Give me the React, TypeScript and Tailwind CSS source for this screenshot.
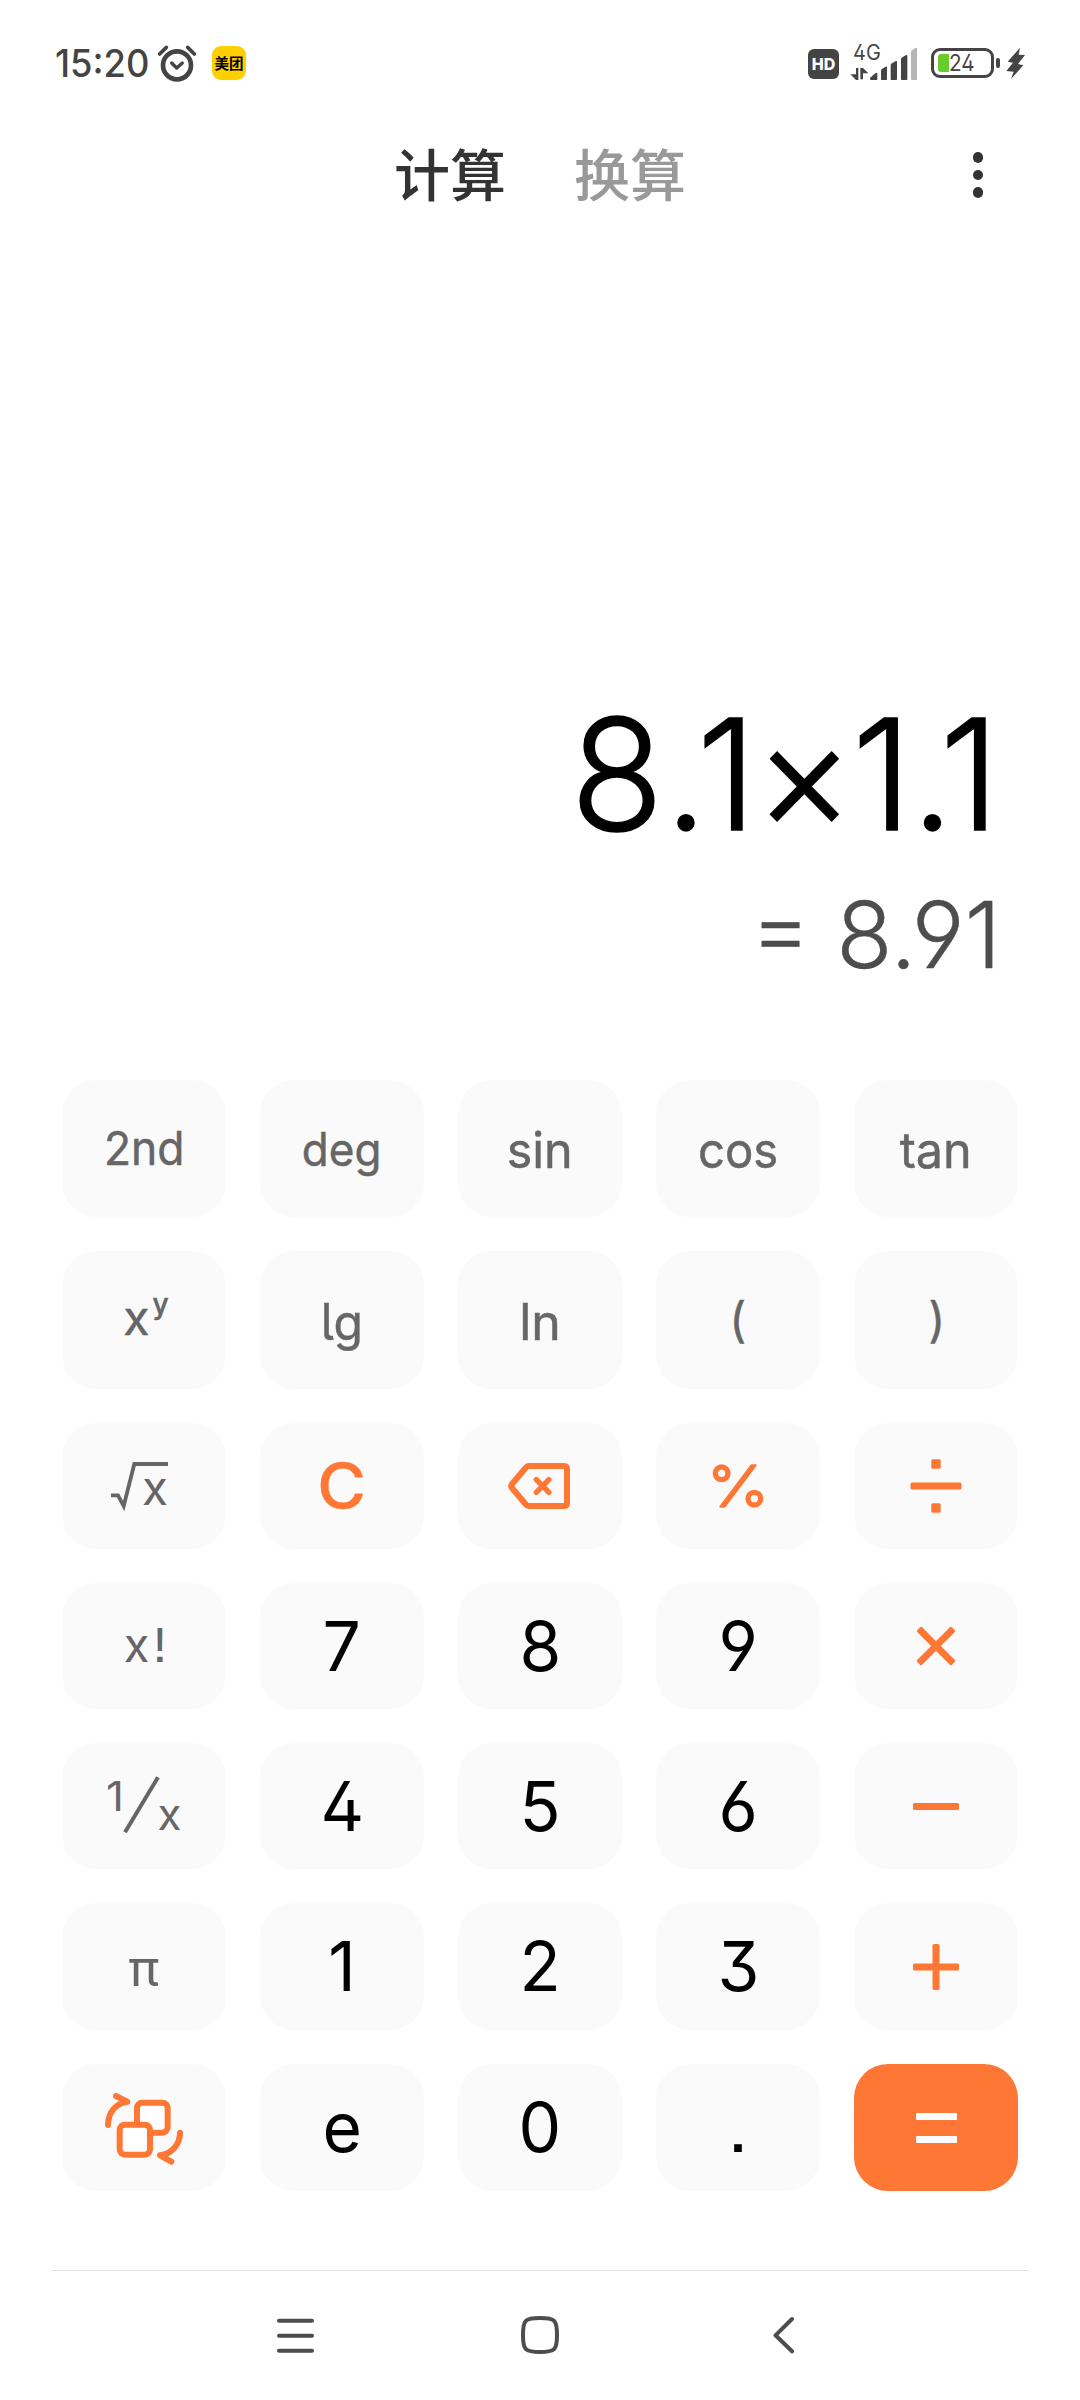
import React from 'react';

const AlarmIcon = () => (
  <svg width="40" height="38" viewBox="0 0 120 114" fill="none" stroke="#444" strokeLinecap="round" strokeLinejoin="round" className="shrink-0">
    <circle cx="60" cy="64" r="42" strokeWidth="14" />
    <path d="M44 57l15 15 17-15" strokeWidth="10" />
    <path d="M8 30l20-20M92 10l20 20" strokeWidth="11" />
  </svg>
);

const SignalIcon = () => (
  <svg width="68" height="32" viewBox="0 0 204 96" fill="#444" className="shrink-0">
    <path d="M18 60h7v36h-7L1 79h17zM31 94V60h8l16 16H39v18z" />
    <path d="M60 92q0-4 4-6l12-10q6-4 6 2v16q0 2-2 2H64q-4 0-4-4zM93 68q0-4 4-6l10-6q4-2 4 2v36q0 2-2 2H95q-2 0-2-2zM122 52q0-4 4-6l10-6q5-2 5 2v52q0 2-2 2h-15q-2 0-2-2zM153 34q0-4 4-6l10-6q5-2 5 2v70q0 2-2 2h-15q-2 0-2-2z" />
    <path fill="#b5b5b5" d="M183 12q0-4 4-6l9-6q5-2 5 2v92q0 2-2 2h-14q-2 0-2-2z" />
  </svg>
);

const StatusBar = () => (
  <div className="flex h-[126px] items-center justify-between pl-[55px] pr-[55px] text-[#444]">
    <div className="flex items-center">
      <span className="mt-[2px] w-[102px] whitespace-nowrap text-[37.5px] font-medium leading-none">
        <span className="inline-block origin-left scale-x-[0.97]">15:20</span>
      </span>
      <AlarmIcon />
      <span className="ml-[15px] flex h-[34px] w-[34px] items-center justify-center rounded-[9px] bg-[#ffd000] font-['Noto_Sans_CJK_SC',sans-serif] text-[14.5px] font-bold leading-none text-black">
        美团
      </span>
    </div>
    <div className="flex items-center">
      <span className="mt-[1px] flex h-[30px] w-[31px] items-center justify-center rounded-[6px] bg-[#444] text-[16px] font-extrabold leading-none text-white">
        HD
      </span>
      <div className="relative ml-[11px] flex h-[34px] w-[68px] items-end">
        <SignalIcon />
        <span className="absolute -top-[4px] left-[3px] text-[21px] leading-none">
          <span className="inline-block origin-left scale-x-[0.95]">4G</span>
        </span>
      </div>
      <div className="relative ml-[13px] flex h-[30px] w-[63px] items-center rounded-[9px] border-[3px] border-[#444] pl-[3.5px]">
        <span className="h-[18.5px] w-[11.5px] shrink-0 rounded-l-[3px] bg-[#67cc2c]" />
        <span className="inline-block origin-left scale-x-[0.9] text-[23px] leading-none">24</span>
      </div>
      <span className="ml-[2px] h-[10px] w-[4px] rounded-[2px] bg-[#444]" />
      <svg width="19" height="32" viewBox="0 0 57 96" fill="#444" className="ml-[6px]">
        <path d="M42 2L5 44l16 3L1 72l22 2-8 22 37-41-16-4 21-27-19-1z" />
      </svg>
    </div>
  </div>
);

const Tabs = () => (
  <div className="flex h-[98px] items-center pl-[394px] pr-[97px] font-['Noto_Sans_CJK_SC',sans-serif] text-[56px] font-medium leading-none">
    <span className="-mt-[6px] w-[180px] text-[#333]">计算</span>
    <span className="-mt-[6px] text-[#999]">换算</span>
    <div className="ml-auto flex flex-col gap-[7px]">
      <span className="h-[10.5px] w-[10.5px] rounded-full bg-[#333]" />
      <span className="h-[10.5px] w-[10.5px] rounded-full bg-[#333]" />
      <span className="h-[10.5px] w-[10.5px] rounded-full bg-[#333]" />
    </div>
  </div>
);

const Display = () => (
  <div className="flex h-[856px] flex-col items-end pt-[472px] leading-none">
    <div className="mr-[81px] flex h-[156px] origin-right scale-x-[0.985] items-center whitespace-nowrap text-[154.5px] font-light text-black [-webkit-text-stroke:1.4px_#000]">
      <span className="tracking-[1px]">8</span>
      <span className="tracking-[-11px]">.</span>
      <span className="tracking-[-2px]">1×</span>
      <span className="tracking-[-1px]">1.1</span>
    </div>
    <div className="mr-[79px] mt-[37px] flex h-[92px] items-center text-[92px] font-light text-[#4d4d4d] [-webkit-text-stroke:0.4px_#4d4d4d]">
      <span className="whitespace-pre">= 8.91</span>
    </div>
  </div>
);

const SqrtLabel = () => (
  <svg width="60" height="52" viewBox="0 0 60 52" className="-ml-[10px] overflow-visible">
    <path d="M2 35.300h7l5.700 10.700L25.300 4H59" fill="none" stroke="#666" strokeWidth="3.800" />
    <text x="33" y="45" fontSize="48" fill="#666" textLength="26" lengthAdjust="spacingAndGlyphs">x</text>
  </svg>
);

const InverseLabel = () => (
  <svg width="76" height="60" viewBox="0 0 76 60" className="overflow-visible">
    <text x="0" y="35.300" fontSize="41.500" fill="#666" textLength="18" lengthAdjust="spacingAndGlyphs">1</text>
    <path d="M19 56.300L52 1.300" fill="none" stroke="#666" strokeWidth="4" />
    <text x="51.500" y="53.700" fontSize="43" fill="#666" textLength="24" lengthAdjust="spacingAndGlyphs">x</text>
  </svg>
);

const BackspaceIcon = () => (
  <svg width="64" height="48" viewBox="0 0 64 48" fill="none" stroke="#ff7735" strokeLinecap="round" strokeLinejoin="round" className="-ml-[2px]">
    <path d="M21.500 4H57q3 0 3 3v34q0 3-3 3H21.500Q20 44 18.500 42L5 26q-1.500-2 0-4L18.500 6Q20 4 21.500 4z" strokeWidth="6" />
    <path d="M29.300 17.700l12.600 12.600M41.900 17.700l-12.600 12.600" strokeWidth="5.400" />
  </svg>
);

const PercentIcon = () => (
  <svg width="54" height="46" viewBox="0 0 162 138" fill="none" stroke="#ff7735">
    <circle cx="32" cy="31" r="19" strokeWidth="16" />
    <circle cx="130" cy="107" r="19" strokeWidth="16" />
    <path d="M28 131L121 7h13L41 131z" fill="#ff7735" strokeWidth="6" strokeLinejoin="round" />
  </svg>
);

const DivideIcon = () => (
  <svg width="52" height="54" viewBox="0 0 52 54" fill="#ff7735">
    <rect x="21.300" y="0.300" width="9.400" height="9.400" rx="1.500" />
    <rect x="0.500" y="23.400" width="51" height="7.200" rx="1.500" />
    <rect x="21.300" y="44.300" width="9.400" height="9.400" rx="1.500" />
  </svg>
);

const TimesIcon = () => (
  <svg width="40" height="40" viewBox="-20 -20 40 40" fill="#ff7735">
    <rect x="-24.500" y="-3.400" width="49" height="6.800" rx="1.500" transform="rotate(45)" />
    <rect x="-24.500" y="-3.400" width="49" height="6.800" rx="1.500" transform="rotate(-45)" />
  </svg>
);

const MinusIcon = () => <span className="h-[7px] w-[46px] rounded-[1.5px] bg-[#ff7735]" />;

const PlusIcon = () => (
  <svg width="46" height="46" viewBox="0 0 46 46" fill="#ff7735">
    <rect x="0" y="19.500" width="46" height="7" rx="1.500" />
    <rect x="19.500" y="0" width="7" height="46" rx="1.500" />
  </svg>
);

const EqualsIcon = () => (
  <div className="flex flex-col gap-[16px]">
    <span className="h-[7px] w-[41px] rounded-[1px] bg-white" />
    <span className="h-[7px] w-[41px] rounded-[1px] bg-white" />
  </div>
);

const ConvertIcon = () => (
  <svg width="80" height="76" viewBox="162 118 240 228" stroke="#ff7735" strokeWidth="18" strokeLinecap="round" strokeLinejoin="round">
    <rect x="261" y="156" width="92" height="90" rx="16" fill="#fff" />
    <rect x="209" y="222" width="91" height="90" rx="16" fill="#fff" />
    <path d="M174 223C174 186 198 157 232 153L198 136" fill="none" />
    <path d="M390 246C390 280 366 310 330 314L364 333" fill="none" />
  </svg>
);

const rows: { height: string; keys: React.ReactNode[] }[] = [
  {
    height: 'h-[137px]',
    keys: [
      <span className="scale-x-[0.955] text-[46.5px] text-[#666]">2nd</span>,
      <span className="scale-x-[0.955] text-[46px] text-[#666]">deg</span>,
      <span className="mt-[4px] scale-x-[0.98] text-[49.5px] text-[#666]">sin</span>,
      <span className="mt-[4px] scale-x-[0.955] text-[49.5px] text-[#666]">cos</span>,
      <span className="mt-[4px] scale-x-[0.98] text-[49.5px] text-[#666]">tan</span>,
    ],
  },
  {
    height: 'h-[138px]',
    keys: [
      <span className="ml-[4px] flex gap-[3px] text-[48px] text-[#666]">
        <span className="-mt-[4px]">x</span>
        <span className="-mt-[8px] text-[28px] font-medium">y</span>
      </span>,
      <span className="mt-[4px] scale-x-[0.96] text-[50px] text-[#666] [font-feature-settings:'cv05']">lg</span>,
      <span className="mt-[4px] text-[50px] text-[#666]">ln</span>,
      <span className="-ml-[1px] scale-x-[0.95] text-[48px] text-[#666]">(</span>,
      <span className="ml-[1px] scale-x-[0.95] text-[48px] text-[#666]">)</span>,
    ],
  },
  {
    height: 'h-[126px]',
    keys: [
      <SqrtLabel />,
      <span className="scale-x-[1.08] text-[61.5px] font-medium text-[#ff7735] [-webkit-text-stroke:0.4px_#ff7735]">C</span>,
      <BackspaceIcon />,
      <PercentIcon />,
      <DivideIcon />,
    ],
  },
  {
    height: 'h-[126px]',
    keys: [
      <span className="-mt-[4px] ml-[2px] flex gap-[4px] text-[47px] text-[#666]">
        <span>x</span>
        <span className="[font-feature-settings:'ss07']">!</span>
      </span>,
      '7',
      '8',
      '9',
      <TimesIcon />,
    ],
  },
  { height: 'h-[126px]', keys: [<InverseLabel />, '4', '5', '6', <MinusIcon />] },
  {
    height: 'h-[127px]',
    keys: [<span className="mt-[3px] scale-x-[1.05] text-[49px] text-[#666]">π</span>, '1', '2', '3', <PlusIcon />],
  },
  { height: 'h-[127px]', keys: [<ConvertIcon />, 'e', '0', '.', <EqualsIcon />] },
];

const Keypad = () => (
  <div className="flex flex-col gap-[34px] px-[62px]">
    {rows.map((row, r) => (
      <div key={r} className={`grid grid-cols-5 gap-[34px] ${row.height}`}>
        {row.keys.map((key, c) => (
          <button
            key={c}
            className={`flex items-center justify-center rounded-[34px] leading-none ${
              r === 6 && c === 4 ? 'bg-[#ff7735]' : 'bg-[#fafafa]'
            } ${r < 2 ? '[-webkit-text-stroke:0.5px_#666]' : ''}`}
          >
            {typeof key === 'string' ? (
              <span className="scale-x-[0.98] text-[69px] text-black [font-feature-settings:'ss01','cv03','cv04','cv09','ss07']">
                {key}
              </span>
            ) : (
              key
            )}
          </button>
        ))}
      </div>
    ))}
  </div>
);

const NavBar = () => (
  <div className="mx-[52px] mt-[79px] flex h-[130px] justify-between border-t border-[#e3e3e3] px-[225px] pt-[45px]">
    <svg width="37" height="38" viewBox="0 0 37 38" stroke="#4d4d4d" strokeWidth="4" strokeLinecap="round">
      <path d="M2 4.700h33M2 19.700h33M2 34.700h33" />
    </svg>
    <svg width="38" height="38" viewBox="0 0 38 38" fill="none" stroke="#4d4d4d" strokeWidth="4">
      <path d="M2 19C2 4 4 2 19 2S36 4 36 19 34 36 19 36 2 34 2 19z" />
    </svg>
    <svg width="37" height="38" viewBox="0 0 37 38" fill="none" stroke="#4d4d4d" strokeWidth="4" strokeLinecap="round" strokeLinejoin="round">
      <path d="M26 3L9.500 19.300 26 35.300" />
    </svg>
  </div>
);

export default function App() {
  return (
    <div className="flex h-[2400px] w-[1080px] flex-col overflow-hidden bg-white font-['Inter',sans-serif] [font-feature-settings:'ss01','cv03','cv04','cv09']">
      <StatusBar />
      <Tabs />
      <Display />
      <Keypad />
      <NavBar />
    </div>
  );
}
